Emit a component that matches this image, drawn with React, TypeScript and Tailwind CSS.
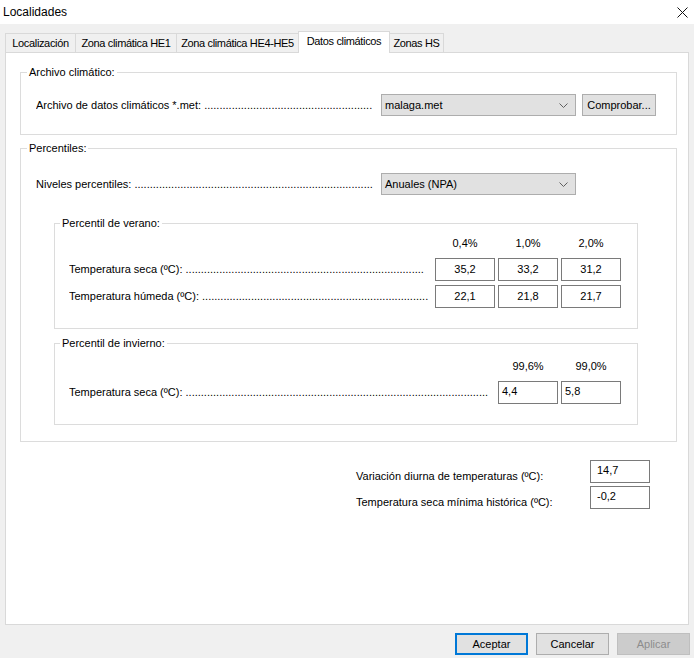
import React from "react";

function Leader({ label, dots, className }: { label: string; dots: number; className: string }) {
    return (
        <div className={`flex whitespace-nowrap overflow-hidden ${className}`}>
            <span>{label}&nbsp;</span>
            <span className="min-w-0 overflow-hidden">{".".repeat(dots)}</span>
        </div>
    );
}

function Combo({ value }: { value: string }) {
    return (
        <div className="w-[195px] h-[22px] bg-[#e1e1e1] border border-[#adadad] flex items-center justify-between pl-[3px] pr-[7px]">
            <span>{value}</span>
            <svg width="9" height="5" viewBox="0 0 9 5" fill="none">
                <polyline points="0.5,0.5 4.5,4.5 8.5,0.5" stroke="#606060" strokeWidth="1" />
            </svg>
        </div>
    );
}

function Box({ value, pad }: { value: string; pad?: "sm" | "md" }) {
    const cls =
        pad === "sm"
            ? "justify-start items-start pl-[3px] pt-[3px]"
            : pad === "md"
            ? "justify-start items-start pl-[6px] pt-[3px]"
            : "justify-center items-center";
    return <div className={`w-[60px] h-[23px] border border-[#7a7a7a] bg-white flex ${cls}`}>{value}</div>;
}

const tabs = [
    { name: "Localización", w: "w-[71px]" },
    { name: "Zona climática HE1", w: "w-[102px]" },
    { name: "Zona climática HE4-HE5", w: "w-[123px]" },
    { name: "Datos climáticos", w: "w-[92px]", active: true },
    { name: "Zonas HS", w: "w-[55px]" },
];

export default function App() {
    return (
        <div className="w-[694px] h-[658px] bg-[#f0f0f0] overflow-hidden text-[11px] leading-[13px] text-black font-['Liberation_Sans',Arial,sans-serif]">
            {/* title bar */}
            <div className="h-[24px] bg-white flex items-center justify-between pl-[3px] pr-[6px]">
                <span className="text-[12px]">Localidades</span>
                <svg width="11" height="11" viewBox="0 0 11 11" fill="none">
                    <path d="M0.5 0.5 L10.5 10.5 M10.5 0.5 L0.5 10.5" stroke="#111" strokeWidth="1" />
                </svg>
            </div>

            {/* tabs */}
            <div className="mt-[7px] ml-[5px] h-[21px] flex items-end tracking-[-0.35px]">
                {tabs.map((t, i) =>
                    t.active ? (
                        <div
                            key={t.name}
                            className={`${t.w} -ml-px h-[22px] -mb-px relative z-10 bg-white border border-b-0 border-[#d9d9d9] flex items-center justify-center pb-[2px] whitespace-nowrap`}
                        >
                            {t.name}
                        </div>
                    ) : (
                        <div
                            key={t.name}
                            className={`${t.w} ${i > 0 ? "-ml-px" : ""} h-[19px] bg-[#f0f0f0] border border-b-0 border-[#d9d9d9] flex items-center justify-center whitespace-nowrap`}
                        >
                            {t.name}
                        </div>
                    )
                )}
            </div>

            {/* tab panel */}
            <div className="ml-[5px] w-[684px] h-[573px] bg-white border border-[#d9d9d9] pt-[12px] pl-[14px]">
                <fieldset className="w-[657px] border border-[#dcdcdc] pb-[18px]">
                    <legend className="ml-[6px] px-[2px] leading-[14px]">Archivo climático:</legend>
                    <div className="mt-[15px] pl-[15px] flex items-center">
                        <Leader label="Archivo de datos climáticos *.met:" dots={55} className="w-[339px] mr-[6px]" />
                        <Combo value="malaga.met" />
                        <div className="ml-[6px] w-[74px] h-[22px] bg-[#e1e1e1] border border-[#adadad] flex items-center justify-center">
                            Comprobar...
                        </div>
                    </div>
                </fieldset>

                <fieldset className="mt-[6px] w-[657px] border border-[#dcdcdc] pb-[16px]">
                    <legend className="ml-[6px] px-[2px] leading-[14px]">Percentiles:</legend>
                    <div className="mt-[18px] pl-[15px] flex items-center">
                        <Leader label="Niveles percentiles:" dots={78} className="w-[339px] mr-[6px]" />
                        <Combo value="Anuales (NPA)" />
                    </div>

                    <fieldset className="mt-[21px] ml-[33px] w-[584px] border border-[#dcdcdc] pb-[20px]">
                        <legend className="ml-[5px] px-[2px] leading-[14px]">Percentil de verano:</legend>
                        <div className="mt-[7px] flex gap-[3px] pl-[380px]">
                            <div className="w-[60px] text-center">0,4%</div>
                            <div className="w-[60px] text-center">1,0%</div>
                            <div className="w-[60px] text-center">2,0%</div>
                        </div>
                        <div className="mt-[8px] pl-[14px] flex items-center">
                            <Leader label="Temperatura seca (ºC):" dots={78} className="w-[359px] mr-[7px]" />
                            <div className="flex gap-[3px]">
                                <Box value="35,2" />
                                <Box value="33,2" />
                                <Box value="31,2" />
                            </div>
                        </div>
                        <div className="mt-[4px] pl-[14px] flex items-center">
                            <Leader label="Temperatura húmeda (ºC):" dots={74} className="w-[359px] mr-[7px]" />
                            <div className="flex gap-[3px]">
                                <Box value="22,1" />
                                <Box value="21,8" />
                                <Box value="21,7" />
                            </div>
                        </div>
                    </fieldset>

                    <fieldset className="mt-[7px] ml-[33px] w-[584px] border border-[#dcdcdc] pb-[20px]">
                        <legend className="ml-[5px] px-[2px] leading-[14px]">Percentil de invierno:</legend>
                        <div className="mt-[10px] flex gap-[3px] pl-[443px]">
                            <div className="w-[60px] text-center">99,6%</div>
                            <div className="w-[60px] text-center">99,0%</div>
                        </div>
                        <div className="mt-[8px] pl-[14px] flex items-center">
                            <Leader label="Temperatura seca (ºC):" dots={99} className="w-[422px] mr-[7px]" />
                            <div className="flex gap-[3px]">
                                <Box value="4,4" pad="sm" />
                                <Box value="5,8" pad="sm" />
                            </div>
                        </div>
                    </fieldset>
                </fieldset>

                <div className="mt-[18px] pl-[336px] flex flex-col gap-[3px]">
                    <div className="flex items-start">
                        <div className="w-[234px] pt-[10px]">Variación diurna de temperaturas (ºC):</div>
                        <Box value="14,7" pad="md" />
                    </div>
                    <div className="flex items-start">
                        <div className="w-[234px] pt-[10px]">Temperatura seca mínima histórica (ºC):</div>
                        <Box value="-0,2" pad="md" />
                    </div>
                </div>
            </div>

            {/* buttons */}
            <div className="mt-[8px] pl-[455px] flex gap-[8px]">
                <button className="w-[73px] h-[22px] bg-[#e1e1e1] border-2 border-[#0078d7] flex items-center justify-center">
                    Aceptar
                </button>
                <button className="w-[73px] h-[22px] bg-[#e1e1e1] border border-[#adadad] flex items-center justify-center">
                    Cancelar
                </button>
                <button className="w-[73px] h-[22px] bg-[#cccccc] border border-[#bfbfbf] text-[#8c8c8c] flex items-center justify-center">
                    Aplicar
                </button>
            </div>
        </div>
    );
}
